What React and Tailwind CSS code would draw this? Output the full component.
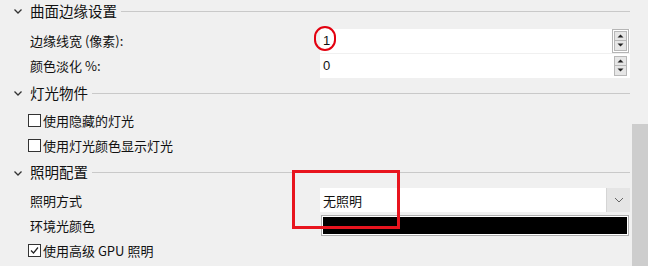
import React from 'react';

const font = { fontFamily: '"Noto Sans CJK SC", "Noto Sans", sans-serif' };

const Chevron = () => (
  <svg width="10" height="10" viewBox="0 0 10 10" className="shrink-0">
    <path d="M1.5 3.5 L5 7 L8.5 3.5" fill="none" stroke="#333" strokeWidth="1.3" />
  </svg>
);

const Header = ({ title, h }) => (
  <div className={`flex items-center pl-[13px] pr-[2px] ${h}`}>
    <Chevron />
    <span className="ml-[7px] text-[14.5px] text-[#111] leading-none">{title}</span>
    <div className="flex-1 ml-[4px] h-px bg-[#c9c9c9]" />
  </div>
);

const Checkbox = ({ checked, label, h }) => (
  <div className={`flex items-center pl-[28px] ${h}`}>
    <div className="w-[13px] h-[13px] border border-[#333] bg-white flex items-center justify-center">
      {checked && (
        <svg width="11" height="11" viewBox="0 0 11 11">
          <path d="M2 5.5 L4.5 8 L9 2.5" fill="none" stroke="#222" strokeWidth="1.2" />
        </svg>
      )}
    </div>
    <span className="ml-[2px] text-[13px] text-[#111] leading-none">{label}</span>
  </div>
);

const Spinner = ({ focused }) => (
  <div className={`w-[17px] h-[24px] flex flex-col items-center justify-center ${focused ? 'border border-[#b5b5b5]' : ''}`}>
    <div className="w-[13px] h-[10px] bg-[#e6e6e6] border border-[#b8b8b8] flex items-center justify-center">
      <svg width="7" height="4" viewBox="0 0 7 4"><path d="M0.5 3.5 L3.5 0.5 L6.5 3.5 Z" fill="#222" /></svg>
    </div>
    <div className="w-[13px] h-[10px] bg-[#e6e6e6] border border-[#b8b8b8] border-t-0 flex items-center justify-center">
      <svg width="7" height="4" viewBox="0 0 7 4"><path d="M0.5 0.5 L3.5 3.5 L6.5 0.5 Z" fill="#222" /></svg>
    </div>
  </div>
);

const NumberRow = ({ label, value, focused, h }) => (
  <div className={`flex items-center ${h}`}>
    <span className="pl-[30px] w-[320px] text-[13px] text-[#111] leading-none">{label}</span>
    <div className="w-[310px] h-[24px] bg-white flex items-center">
      <span className="flex-1 pl-[3px] text-[13px] text-[#111] leading-none" style={{ fontFamily: '"Liberation Sans", sans-serif' }}>{value}</span>
      <div className="pr-[1px]">
        <Spinner focused={focused} />
      </div>
    </div>
  </div>
);

export default function App() {
  return (
    <div className="w-[648px] h-[266px] bg-[#f0f0f0] flex overflow-hidden" style={font}>
      <div className="flex-1 relative flex flex-col">
        <Header title="曲面边缘设置" h="h-[22px]" />
        <div className="h-[6px]" />
        <NumberRow label="边缘线宽 (像素):" value="1" focused h="h-[25px]" />
        <NumberRow label="颜色淡化 %:" value="0" h="h-[25px]" />
        <Header title="灯光物件" h="h-[30px]" />
        <Checkbox label="使用隐藏的灯光" h="h-[25px]" />
        <Checkbox label="使用灯光颜色显示灯光" h="h-[25px]" />
        <Header title="照明配置" h="h-[29px]" />
        <div className="flex items-center h-[26px]">
          <span className="pl-[30px] w-[320px] text-[13px] text-[#111] leading-none">照明方式</span>
          <div className="w-[310px] h-[24px] bg-white flex items-center">
            <span className="flex-1 pl-[3px] text-[13px] text-[#111] leading-none">无照明</span>
            <div className="w-[24px] h-[24px] bg-[#e5e5e5] border-l border-[#d5d5d5] flex items-center justify-center">
              <svg width="10" height="6" viewBox="0 0 10 6"><path d="M1 1 L5 5 L9 1" fill="none" stroke="#666" strokeWidth="1" /></svg>
            </div>
          </div>
        </div>
        <div className="flex items-center h-[25px]">
          <span className="pl-[30px] w-[321px] text-[13px] text-[#111] leading-none">环境光颜色</span>
          <div className="w-[308px] h-[21px] border border-[#adadad] bg-white p-[1px]">
            <div className="w-full h-full bg-black" />
          </div>
        </div>
        <Checkbox checked label="使用高级 GPU 照明" h="h-[24px]" />

        <div className="absolute left-[314px] top-[26px] w-[22px] h-[25px] rounded-full border-2 border-[#e3000f]" />
        <div className="absolute left-[292px] top-[170px] w-[108px] h-[59px] border-[3px] border-[#e8141e]" />
      </div>
      <div className="w-[16px] h-full flex flex-col">
        <div className="h-[124px] bg-[#f0f0f0]" />
        <div className="flex-1 bg-[#cdcdcd]" />
      </div>
    </div>
  );
}
